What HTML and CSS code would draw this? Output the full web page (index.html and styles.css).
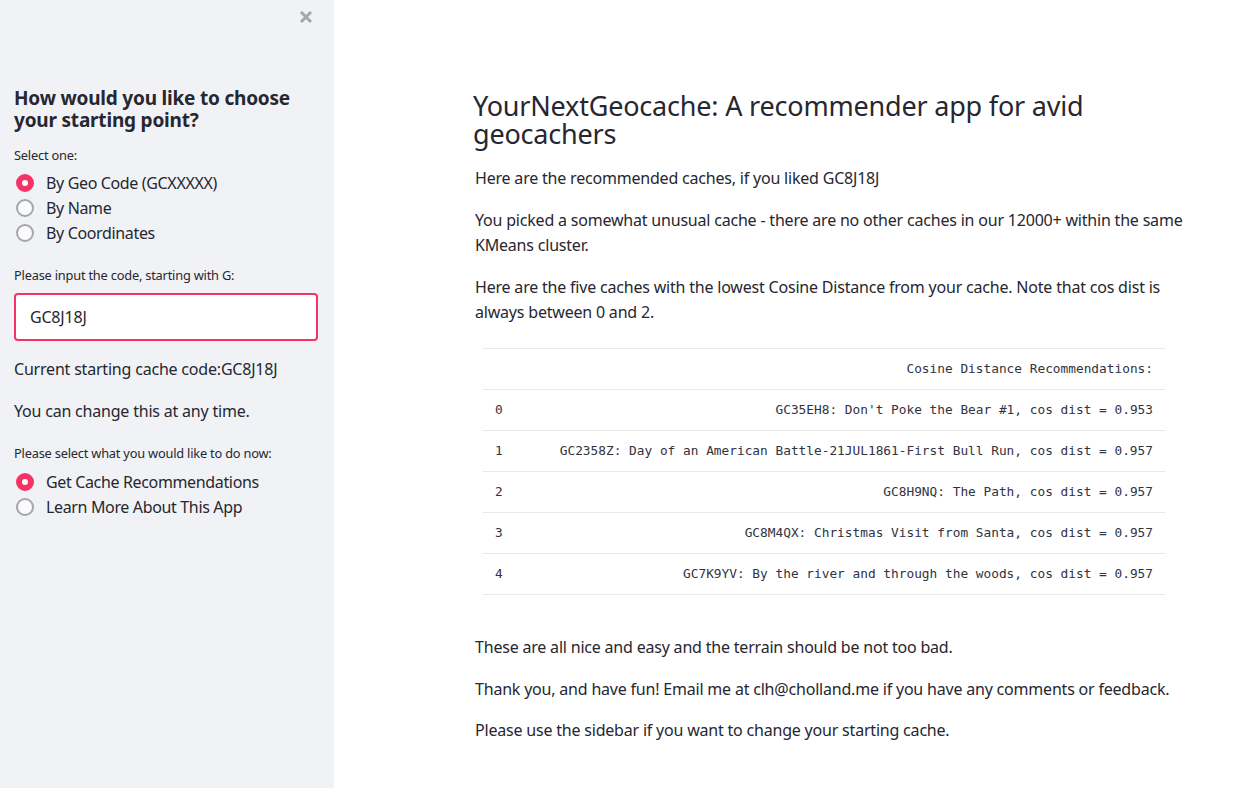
FILE: index.html
```html
<!DOCTYPE html>
<html>
<head>
<meta charset="utf-8">
<link rel="stylesheet" href="styles.css">
</head>
<body>
<div class="app">
  <aside class="sidebar">
    <button class="close" aria-label="Close">
      <svg width="14" height="14" viewBox="0 0 14 14"><path d="M2 2L12 12M12 2L2 12" stroke="#a3a6ae" stroke-width="3" stroke-linecap="butt"/></svg>
    </button>
    <h2 class="side-title">How would you like to choose your starting point?</h2>
    <div class="label">Select one:</div>
    <div class="radios">
      <div class="radio checked"><span class="dot"></span><span>By Geo Code (GCXXXXX)</span></div>
      <div class="radio"><span class="dot"></span><span>By Name</span></div>
      <div class="radio"><span class="dot"></span><span>By Coordinates</span></div>
    </div>
    <div class="label label-input">Please input the code, starting with G:</div>
    <div class="input">GC8J18J</div>
    <p class="side-p">Current starting cache code:GC8J18J</p>
    <p class="side-p">You can change this at any time.</p>
    <div class="label label-do">Please select what you would like to do now:</div>
    <div class="radios">
      <div class="radio checked"><span class="dot"></span><span>Get Cache Recommendations</span></div>
      <div class="radio"><span class="dot"></span><span>Learn More About This App</span></div>
    </div>
  </aside>
  <main class="main">
    <div class="content">
      <h1 class="title">YourNextGeocache: A recommender app for avid geocachers</h1>
      <p>Here are the recommended caches, if you liked GC8J18J</p>
      <p>You picked a somewhat unusual cache - there are no other caches in our 12000+ within the same KMeans cluster.</p>
      <p>Here are the five caches with the lowest Cosine Distance from your cache. Note that cos dist is always between 0 and 2.</p>
      <table class="table">
        <thead>
          <tr><th></th><th>Cosine Distance Recommendations:</th></tr>
        </thead>
        <tbody>
          <tr><td class="idx">0</td><td>GC35EH8: Don't Poke the Bear #1, cos dist = 0.953</td></tr>
          <tr><td class="idx">1</td><td>GC2358Z: Day of an American Battle-21JUL1861-First Bull Run, cos dist = 0.957</td></tr>
          <tr><td class="idx">2</td><td>GC8H9NQ: The Path, cos dist = 0.957</td></tr>
          <tr><td class="idx">3</td><td>GC8M4QX: Christmas Visit from Santa, cos dist = 0.957</td></tr>
          <tr><td class="idx">4</td><td>GC7K9YV: By the river and through the woods, cos dist = 0.957</td></tr>
        </tbody>
      </table>
      <p class="after">These are all nice and easy and the terrain should be not too bad.</p>
      <p>Thank you, and have fun! Email me at clh@cholland.me if you have any comments or feedback.</p>
      <p>Please use the sidebar if you want to change your starting cache.</p>
    </div>
  </main>
</div>
</body>
</html>
```
FILE: styles.css
```css
html, body {
  margin: 0;
  padding: 0;
  background: #ffffff;
}
body {
  font-family: "Noto Sans", "Open Sans", sans-serif;
  color: #262730;
  font-size: 16px;
  letter-spacing: -0.2px;
}
.app {
  display: flex;
  min-height: 788px;
}
.sidebar {
  width: 334px;
  box-sizing: border-box;
  background: #f0f2f6;
  padding: 87px 16px 0 14px;
  position: relative;
  flex: none;
}
.close {
  position: absolute;
  top: 10px;
  left: 299px;
  border: 0;
  background: none;
  padding: 0;
  width: 14px;
  height: 14px;
  display: block;
}
.close svg { display: block; }
.side-title {
  margin: 0 0 16px;
  font-size: 19px;
  line-height: 22px;
  font-weight: 700;
}
.label {
  font-size: 12.8px;
  line-height: 16px;
  margin-bottom: 7px;
}
.radios {
  display: flex;
  flex-direction: column;
}
.radio {
  display: flex;
  align-items: center;
  height: 25px;
  font-size: 16px;
  gap: 12px;
  padding-left: 2px;
  letter-spacing: -0.35px;
}
.dot {
  width: 18px;
  height: 18px;
  box-sizing: border-box;
  border-radius: 50%;
  border: 2px solid #a3a6ae;
  background: #fbfbfc;
  flex: none;
}
.radio.checked .dot {
  border: 6px solid #f63366;
  background: #ffffff;
}
.label-input {
  margin-top: 22px;
  margin-bottom: 10px;
}
.input {
  height: 48px;
  box-sizing: border-box;
  border: 2px solid #f63366;
  border-radius: 4px;
  background: #ffffff;
  padding: 0 14px;
  display: flex;
  align-items: center;
  font-size: 16px;
}
.side-p {
  margin: 16px 0 0;
  line-height: 25.6px;
}
.label-do {
  margin-top: 21px;
  margin-bottom: 8px;
}
.main {
  flex: 1;
  padding: 92px 0 40px 141px;
}
.content {
  width: 712px;
}
.title {
  margin: 0 0 18px -2px;
  font-size: 27px;
  line-height: 28px;
  font-weight: 400;
  letter-spacing: -0.2px;
}
.content p {
  margin: 0 0 16px;
  line-height: 25.6px;
}
.table {
  border-collapse: collapse;
  width: 682px;
  margin: 22px 0 0 8px;
  font-family: "DejaVu Sans Mono", "Liberation Mono", monospace;
  font-size: 12.8px;
  letter-spacing: 0;
  color: #31333f;
}
.table th, .table td {
  height: 40px;
  padding: 0 12px;
  border-top: 1px solid #e6e9ef;
  border-bottom: 1px solid #e6e9ef;
  text-align: right;
  font-weight: 400;
}
.table td.idx {
  text-align: left;
  width: 20px;
}
.content p.after {
  margin-top: 40px;
}
```
